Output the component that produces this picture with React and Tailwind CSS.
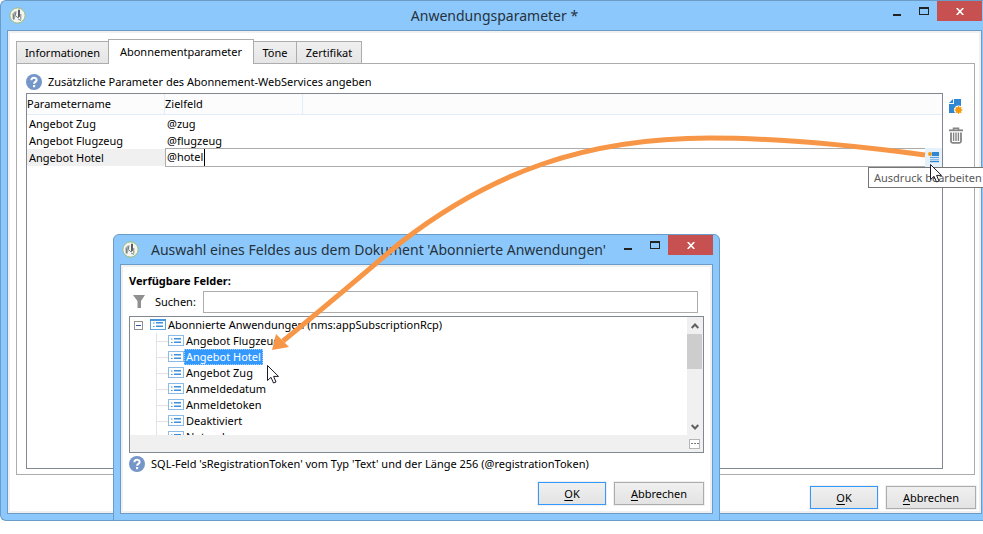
import React from "react";

function AppLogo() {
  return (
    <svg width="17" height="17" viewBox="0 0 17 17" className="shrink-0">
      <circle cx="8.5" cy="8.5" r="7.6" fill="#f4f5f3" stroke="#9dbb62" strokeWidth="0.9" />
      <path d="M3.2 7 L5.5 4.5 L7.8 4.2 L7 8 L5.5 12.8 L3.6 12 Z" fill="#a9aeae" />
      <path d="M4.6 7.5 V12.5 M6.4 5.5 V8.5" stroke="#6d7474" strokeWidth="0.9" />
      <path d="M10 2.8 V10" stroke="#343b3b" strokeWidth="1.6" />
      <path d="M7 9 L9 11 L10.5 9.5 M11.8 7 V12.5 M9 12 L12 13.5" stroke="#7d8484" strokeWidth="1" fill="none" />
    </svg>
  );
}

function HelpIcon() {
  return (
    <svg width="16" height="16" viewBox="0 0 16 16" className="shrink-0">
      <circle cx="8" cy="8" r="8" fill="#7596c8" />
      <path d="M5.4 6.2 C5.4 3 10.6 3 10.6 6 C10.6 7.9 8.1 7.9 8.1 9.8" fill="none" stroke="#fff" strokeWidth="2" />
      <rect x="7" y="11" width="2.2" height="2.2" fill="#fff" />
    </svg>
  );
}

function NewIcon() {
  return (
    <svg width="15" height="17" viewBox="0 0 15 17">
      <path d="M5 1 H12 V15 H0 V6 H5 Z" fill="#2f86d2" />
      <path d="M0 5 L4 1 V5 Z" fill="#2f86d2" />
      <circle cx="9.5" cy="12" r="4.6" fill="#fff" />
      <circle cx="9.5" cy="12" r="3" fill="#f39a0c" />
      <path d="M9.5 8 V16 M5.5 12 H13.5 M6.7 9.2 L12.3 14.8 M12.3 9.2 L6.7 14.8" stroke="#f39a0c" strokeWidth="1.1" />
    </svg>
  );
}

function TrashIcon() {
  return (
    <svg width="14" height="17" viewBox="0 0 14 17" fill="none" stroke="#858585">
      <path d="M0 3.3 H14" strokeWidth="1.8" />
      <path d="M4.5 3 V1.2 H9.5 V3" strokeWidth="1.5" />
      <path d="M2 5.5 V14.3 Q2 15.8 3.5 15.8 H10.5 Q12 15.8 12 14.3 V5.5" strokeWidth="1.8" />
      <path d="M4.6 5.5 V14 M7 5.5 V14 M9.4 5.5 V14" strokeWidth="1.4" />
    </svg>
  );
}

function EditIcon() {
  return (
    <svg width="11" height="11" viewBox="0 0 11 11">
      <path d="M4 0 H11 V4 H4 Z" fill="#2f86d2" />
      <path d="M2 5.5 H11" stroke="#5ea3de" strokeWidth="1.2" />
      <path d="M2 7.5 H11" stroke="#8dbde8" strokeWidth="1" />
      <path d="M2 9.5 H11" stroke="#2f86d2" strokeWidth="1.4" />
      <circle cx="2" cy="2" r="1.9" fill="#f39a0c" />
    </svg>
  );
}

function FilterIcon() {
  return (
    <svg width="14" height="15" viewBox="0 0 14 15">
      <path d="M1 0 H13 L9 6 V13 H5.5 V6 Z" fill="#8f8f8f" />
    </svg>
  );
}

function FieldIcon({ header }) {
  return (
    <svg width="16" height="12" viewBox="0 0 16 12" className="shrink-0">
      <rect x="0.5" y="0.5" width="15" height="10" fill="#fff" stroke={header ? "#5aa2e2" : "#8bbbe8"} />
      {header && <path d="M0 1 H16" stroke="#4a97dc" strokeWidth="2" />}
      <path d="M3 4 H4.5 M3 7.5 H4.5" stroke="#3f8fd8" />
      <path d="M6 3.5 H13 M6 7.5 H13" stroke="#3f8fd8" />
      <path d="M6 4.5 H13 M6 6.5 H13" stroke="#9cc6ee" />
    </svg>
  );
}

function Window({ title, centered, className, children }) {
  return (
    <section className={"flex flex-col border-[#6b9cc8] bg-[#8cc8fb] pb-1.5 " + className}>
      <header className="flex h-[29px] shrink-0">
        <div className={centered ? "flex w-[99px] items-center pl-0.5" : "flex w-[31px] items-center pl-0.5"}>
          <AppLogo />
        </div>
        <h1 className={"flex-1 whitespace-nowrap text-[14px] leading-[30px] text-[#26323d] " + (centered ? "text-center" : "")}>
          {title}
        </h1>
        <div className="flex h-5">
          <button aria-label="Minimieren" className="flex w-7 items-center justify-center">
            <span className="mt-2 h-[2px] w-2 bg-[#222]" />
          </button>
          <button aria-label="Maximieren" className="flex w-[26px] items-center justify-center">
            <span className="h-2 w-[10px] border border-t-2 border-[#222]" />
          </button>
          <button aria-label="Schließen" className="flex w-[45px] items-center justify-center bg-[#c75050]">
            <svg width="8" height="7" viewBox="0 0 8 7">
              <path d="M0.7 0 L7.3 7 M7.3 0 L0.7 7" stroke="#fff" strokeWidth="1.6" />
            </svg>
          </button>
        </div>
      </header>
      <div className="flex flex-1 flex-col border border-[#6b9cc8]">
        <div className="flex flex-1 flex-col border-2 border-[#f0f0f0] bg-white">{children}</div>
      </div>
    </section>
  );
}

function DialogButtons() {
  const base = "h-[23px] border bg-linear-to-b from-[#f0f0f0] to-[#e3e3e3] leading-[21px] outline outline-[#f0f0f0] ";
  return (
    <div className="flex justify-end gap-2">
      <button className={base + "w-[68px] border-[#3399ff]"}>
        <span className="underline underline-offset-2">O</span>K
      </button>
      <button className={base + "w-[90px] border-[#acacac]"}>
        <span className="underline underline-offset-2">A</span>bbrechen
      </button>
    </div>
  );
}

const tabs = [
  { name: "Informationen", width: "w-[92px]" },
  { name: "Abonnementparameter", width: "w-[146px]", active: true },
  { name: "Töne", width: "w-[43px]" },
  { name: "Zertifikat", width: "w-[65px]" },
];

function Tabs() {
  return (
    <div role="tablist" className="flex h-6 items-end">
      {tabs.map((t) => (
        <button
          key={t.name}
          role="tab"
          aria-selected={!!t.active}
          className={
            "whitespace-nowrap border border-[#acacac] " +
            t.width +
            (t.active
              ? " z-10 -mb-px h-[25px] border-b-0 bg-white"
              : " h-[22px] border-b-0 bg-linear-to-b from-[#f0f0f0] to-[#e5e5e5] first:border-r-0 not-first:border-l-0")
          }
        >
          {t.name}
        </button>
      ))}
    </div>
  );
}

function ParameterTable() {
  return (
    <div className="flex-1 border border-[#828790]">
      <table className="w-full table-fixed border-separate border-spacing-0 text-left">
        <colgroup>
          <col className="w-[138px]" />
          <col className="w-[138px]" />
          <col />
        </colgroup>
        <thead>
          <tr className="h-[21px] bg-[#fcfcfc]">
            <th className="border-r border-b border-[#e3edfa] p-0 font-normal">Parametername</th>
            <th className="border-r border-b border-[#e3edfa] p-0 font-normal">Zielfeld</th>
            <th className="border-b border-[#e3edfa] p-0" />
          </tr>
        </thead>
        <tbody>
          <tr className="h-[17px]">
            <td className="p-0 pl-0.5">Angebot Zug</td>
            <td className="p-0 pl-0.5">@zug</td>
            <td className="p-0" />
          </tr>
          <tr className="h-[17px]">
            <td className="p-0 pl-0.5">Angebot Flugzeug</td>
            <td className="p-0 pl-0.5">@flugzeug</td>
            <td className="p-0" />
          </tr>
          <tr className="h-[17px]">
            <td className="bg-[#f0f0f0] p-0 pl-0.5">
              <label htmlFor="target">Angebot Hotel</label>
            </td>
            <td colSpan={2} className="p-0">
              <div className="relative -my-px flex h-[19px]">
                <input
                  id="target"
                  defaultValue="@hotel"
                  className="min-w-0 flex-1 border border-r-0 border-[#acacac] bg-white pb-px pl-px outline-none"
                />
                <span className="absolute top-px left-[39px] h-[17px] w-px bg-black" />
                <button aria-label="Ausdruck bearbeiten" className="flex w-[17px] items-center justify-center bg-[#e5f1fb]">
                  <EditIcon />
                </button>
              </div>
            </td>
          </tr>
        </tbody>
      </table>
    </div>
  );
}

const fields = ["Angebot Flugzeug", "Angebot Hotel", "Angebot Zug", "Anmeldedatum", "Anmeldetoken", "Deaktiviert", "Notendung"];

function FieldTree() {
  return (
    <div className="mt-[3px] border border-[#828790]">
      <div className="flex h-[118px] overflow-hidden">
        <div className="flex-1 pl-1">
          <div className="flex h-4 items-center">
            <button aria-label="Zuklappen" className="mr-[7px] flex h-[9px] w-[9px] items-center justify-center border border-[#919191]">
              <span className="h-px w-[5px] bg-[#33539a]" />
            </button>
            <FieldIcon header />
            <span className="pl-0.5">Abonnierte Anwendungen (nms:appSubscriptionRcp)</span>
          </div>
          <ul className="ml-[22px] border-l border-[#e3e3e3]">
            {fields.map((f) => (
              <li key={f} className="flex h-4 items-center">
                <span className="h-px w-[11px] bg-[#e3e3e3]" />
                <FieldIcon />
                <span
                  className={
                    f === "Angebot Hotel"
                      ? "h-4 border border-dotted border-[#9fd0ff] bg-[#3399ff] px-px leading-[14px] text-white"
                      : "pl-0.5"
                  }
                >
                  {f}
                </span>
              </li>
            ))}
          </ul>
        </div>
        <div className="flex w-4 flex-col items-center justify-between bg-[#f0f0f0]">
          <div className="w-full">
            <div className="flex h-[17px] items-center justify-center">
              <svg width="8" height="6" viewBox="0 0 8 6">
                <path d="M0.7 5 L4 1.5 L7.3 5" fill="none" stroke="#606060" strokeWidth="2" />
              </svg>
            </div>
            <div className="mr-px h-[35px] bg-[#cdcdcd]" />
          </div>
          <div className="flex h-[17px] items-center justify-center">
            <svg width="8" height="6" viewBox="0 0 8 6">
              <path d="M0.7 1 L4 4.5 L7.3 1" fill="none" stroke="#606060" strokeWidth="2" />
            </svg>
          </div>
        </div>
      </div>
      <div className="flex h-[17px] items-center justify-end bg-[#f0f0f0] pr-[3px]">
        <button aria-label="Mehr" className="flex h-[10px] w-[11px] items-center justify-center gap-px border border-[#b5b5b5] bg-white">
          <span className="h-px w-0.5 bg-[#777]" />
          <span className="h-px w-0.5 bg-[#777]" />
          <span className="h-px w-0.5 bg-[#777]" />
        </button>
      </div>
    </div>
  );
}

function Pointer({ x, y }) {
  return (
    <path
      transform={`translate(${x} ${y})`}
      d="M0.5 0.5 V15.5 L4 12.3 L6.5 18 L9 17 L6.6 11.4 H11.5 Z"
      fill="#fff"
      stroke="#1b1b2a"
      strokeWidth="1"
    />
  );
}

export default function App() {
  return (
    <main className="relative overflow-hidden bg-white pb-3 font-['Noto_Sans',sans-serif] text-[11px] leading-4 text-black">
      <Window title="Anwendungsparameter *" centered className="min-h-[521px] rounded-l-md border-y border-l pr-px pl-1.5">
        <div className="flex flex-1 flex-col pt-1.5 pr-1 pb-0.5 pl-1.5">
          <Tabs />
          <div className="flex flex-1 flex-col border border-[#acacac] pt-2.5 pr-2.5 pb-[5px] pl-[9px]">
            <div className="flex items-center gap-1.5">
              <HelpIcon />
              <p>Zusätzliche Parameter des Abonnement-WebServices angeben</p>
            </div>
            <div className="mt-[3px] flex flex-1 gap-1.5">
              <ParameterTable />
              <div className="flex flex-col gap-3 pt-[5px]">
                <button aria-label="Neu">
                  <NewIcon />
                </button>
                <button aria-label="Löschen">
                  <TrashIcon />
                </button>
              </div>
            </div>
          </div>
          <div className="-mr-px pt-[11px]">
            <DialogButtons />
          </div>
        </div>
      </Window>

      <div className="absolute top-[167px] left-[868px] h-[21px] border border-[#767676] bg-white px-[5px] leading-[19px] whitespace-nowrap text-[#575757]">
        Ausdruck bearbeiten
      </div>

      <Window
        title="Auswahl eines Feldes aus dem Dokument 'Abonnierte Anwendungen'"
        className="absolute top-[234px] left-[113px] w-[607px] rounded-t-md border px-1.5"
      >
        <div className="pt-1.5 pr-1.5 pb-1.5 pl-1.5">
          <h2 className="font-bold">Verfügbare Felder:</h2>
          <div className="mt-0.5 flex h-[22px] items-center pr-1.5 pl-[3px]">
            <FilterIcon />
            <label htmlFor="search" className="w-[57px] pl-[9px]">
              Suchen:
            </label>
            <input id="search" className="h-[22px] min-w-0 flex-1 border border-[#acacac] px-1 outline-none" />
          </div>
          <FieldTree />
          <div className="mt-[3px] mb-[10px] flex items-center gap-1.5">
            <HelpIcon />
            <p>SQL-Feld 'sRegistrationToken' vom Typ 'Text' und der Länge 256 (@registrationToken)</p>
          </div>
          <DialogButtons />
        </div>
      </Window>

      <svg width="983" height="534" viewBox="0 0 983 534" className="pointer-events-none absolute top-0 left-0">
        <path
          d="M925 155 C850 145 775 138 710 138 C585 138 490 173 400 243 C360 277 325 307 283 341"
          fill="none"
          stroke="#f79646"
          strokeWidth="5"
        />
        <path d="M272 350 L276 334 L289 347 Z" fill="#f79646" />
        <Pointer x={930} y={164} />
        <Pointer x={267} y={365} />
      </svg>
    </main>
  );
}
